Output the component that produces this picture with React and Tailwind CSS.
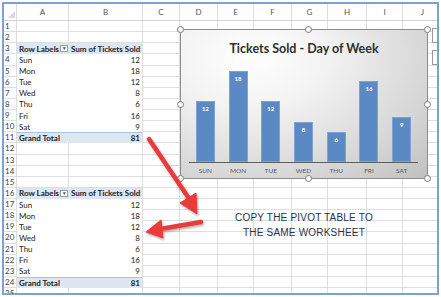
const cols = ["", "A", "B", "C", "D", "E", "F", "G", "H", "I", "J"]
const widths = ["w-[13px]", "w-[52px]", "w-[74px]", "w-[37px]", "w-[38px]", "w-[36px]", "w-[38px]", "w-[36px]", "w-[39px]", "w-[36px]", "w-[40px]"]

const tickets = [
    ["Sun", 12],
    ["Mon", 18],
    ["Tue", 12],
    ["Wed", 8],
    ["Thu", 6],
    ["Fri", 16],
    ["Sat", 9],
]

const cell = "h-full shrink-0 border-r border-b border-[#dedede]"

const PivotCell = ({idx}) => {
    if (idx === 0) {
        return (
            <div className="h-full w-[126px] shrink-0 flex items-center bg-[#dde7f3] border-r border-[#dedede] font-bold">
                <div className="w-[52px] pl-[2px] flex items-center justify-between pr-[1px]">
                    <span>Row Labels</span>
                    <span className="w-[8px] h-[7px] border border-[#9a9a9a] bg-white flex items-center justify-center text-[5px] leading-none text-[#555]">▾</span>
                </div>
                <div className="pl-[2px]">Sum of Tickets Sold</div>
            </div>
        )
    }
    if (idx === 8) {
        return (
            <div className="h-full w-[126px] shrink-0 flex items-center justify-between px-[2px] bg-[#dde7f3] border-t border-[#a9c2e2] border-r border-r-[#dedede] font-bold">
                <span>Grand Total</span>
                <span>81</span>
            </div>
        )
    }
    const [day, n] = tickets[idx - 1]
    return (
        <div className="h-full w-[126px] shrink-0 flex items-center justify-between px-[2px] bg-white border-r border-[#dedede]">
            <span>{day}</span>
            <span>{n}</span>
        </div>
    )
}

const Row = ({n}) => {
    let pivot = null
    if (n >= 3 && n <= 11) pivot = n - 3
    if (n >= 16 && n <= 24) pivot = n - 16

    return (
        <div className="flex h-[11.13px] text-[8px] leading-none text-[#222]">
            <div className={`${cell} ${widths[0]} flex items-center pl-[1px] text-[#444]`}>{n}</div>
            {pivot !== null ? (
                <PivotCell idx={pivot}/>
            ) : (
                <>
                    <div className={`${cell} ${widths[1]}`}></div>
                    <div className={`${cell} ${widths[2]}`}></div>
                </>
            )}
            {widths.slice(3).map((w, i) => (
                <div key={i} className={`${cell} ${w}`}></div>
            ))}
        </div>
    )
}

const Handle = ({className}) => (
    <div className={`absolute w-[7px] h-[7px] rounded-full bg-white border border-[#7a7a7a] ${className}`}></div>
)

const Chart = () => (
    <div className="absolute left-[176px] top-[25px] w-[248px] h-[150px]">
        <div className="w-full h-full border border-[#8c8c8c] bg-[radial-gradient(ellipse_at_28%_18%,#ffffff_0%,#f3f3f3_30%,#d4d4d4_75%,#c0c0c0_100%)] flex flex-col">
            <div className="pt-[11px] h-[26px] text-center text-[12.5px] leading-[15px] font-bold text-[#2e2e2e]">
                Tickets Sold - Day of Week
            </div>
            <div className="ml-[8px] w-[229px] h-[107px] flex items-end border-b border-[#5f5f5f]">
                {tickets.map(([day, n]) => (
                    <div key={day} className="flex-1 flex justify-center">
                        <div
                            className="w-[19px] bg-[#5b89c4] border border-[#7ea3d3] text-center text-white text-[6px] font-bold pt-[4px] leading-none"
                            style={{height: n * 5.05}}
                        >
                            {n}
                        </div>
                    </div>
                ))}
            </div>
            <div className="ml-[8px] w-[229px] flex pt-[5px]">
                {tickets.map(([day]) => (
                    <div key={day} className="flex-1 text-center text-[6.5px] leading-none text-[#595959]">
                        {day.toUpperCase()}
                    </div>
                ))}
            </div>
        </div>
        <Handle className="-left-[3px] -top-[3px]"/>
        <Handle className="left-[125px] -top-[3px]"/>
        <Handle className="-right-[3px] -top-[3px]"/>
        <Handle className="-left-[3px] top-[72px]"/>
        <Handle className="-right-[3px] top-[72px]"/>
        <Handle className="-left-[3px] -bottom-[3px]"/>
        <Handle className="left-[125px] -bottom-[3px]"/>
        <Handle className="-right-[3px] -bottom-[3px]"/>
    </div>
)

const Arrows = () => (
    <svg className="absolute inset-0" width="433" height="289" viewBox="0 0 433 289">
        <defs>
            <filter id="sh" x="-20%" y="-20%" width="140%" height="140%">
                <feDropShadow dx="1" dy="1.5" stdDeviation="1" floodColor="#000" floodOpacity="0.35"/>
            </filter>
        </defs>
        <g filter="url(#sh)" fill="#ea3a3a" stroke="#ea3a3a">
            <line x1="145" y1="135" x2="186" y2="196" strokeWidth="4.5" strokeLinecap="round"/>
            <polygon points="193,210 176,199 192,189" strokeWidth="1" strokeLinejoin="round"/>
            <line x1="197" y1="218" x2="156" y2="225" strokeWidth="4.5" strokeLinecap="round"/>
            <polygon points="142,228 157,216 159,234" strokeWidth="1" strokeLinejoin="round"/>
        </g>
    </svg>
)

export default function App() {
    const rows = Array.from({length: 25}, (_, i) => i + 1)
    return (
        <div className="w-[441px] h-[297px] bg-white p-[2px] font-['Lato','Liberation_Sans',sans-serif]">
            <div className="relative w-[437px] h-[293px] border-2 border-[#7f9fd8] overflow-hidden bg-white">
                <div className="flex h-[17px] text-[8px] text-[#555] border-b border-[#d4d4d4]">
                    {cols.map((c, i) => (
                        <div key={i} className={`${widths[i]} shrink-0 h-full border-r border-[#dedede] flex items-center justify-center relative`}>
                            {i === 0 ? (
                                <svg className="absolute right-[1px] bottom-[2px]" width="7" height="7" viewBox="0 0 7 7">
                                    <polygon points="7,0 7,7 0,7" fill="#dadada"/>
                                </svg>
                            ) : c}
                        </div>
                    ))}
                </div>
                {rows.map(n => <Row key={n} n={n}/>)}
                <Chart/>
                <div className="absolute left-[224px] top-[206px] w-[152px] text-center text-[10px] leading-[15px] tracking-[0.2px] text-[#283350] font-['Liberation_Sans',sans-serif]">
                    COPY THE PIVOT TABLE TO<br/>THE SAME WORKSHEET
                </div>
                <div className="absolute left-[428px] top-[24px] w-[12px] h-[15px] border border-[#9a9a9a] bg-white"></div>
                <div className="absolute left-[428px] top-[46px] w-[12px] h-[15px] border border-[#9a9a9a] bg-white"></div>
                <Arrows/>
            </div>
        </div>
    )
}
